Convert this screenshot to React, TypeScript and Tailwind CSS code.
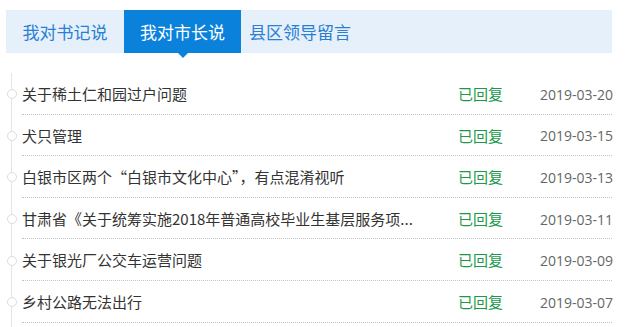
import React from "react";

const rows = [
  { t: "关于稀土仁和园过户问题", d: "2019-03-20" },
  { t: "犬只管理", d: "2019-03-15" },
  { t: "白银市区两个“白银市文化中心”，有点混淆视听", d: "2019-03-13" },
  { t: "甘肃省《关于统筹实施2018年普通高校毕业生基层服务项...", d: "2019-03-11" },
  { t: "关于银光厂公交车运营问题", d: "2019-03-09" },
  { t: "乡村公路无法出行", d: "2019-03-07" },
];

export default function App() {
  return (
    <div
      className="w-[640px] h-[327px] bg-white overflow-hidden"
      style={{ fontFamily: '"Noto Sans CJK SC", "Noto Sans", sans-serif' }}
    >
      <div className="pt-[10px] pl-[6px] w-[612px]">
        <div className="flex h-[43px] bg-[#e6f0fa] text-[17px]">
          <div className="w-[118px] flex items-center justify-center text-[#2a7fd4]">我对书记说</div>
          <div className="relative w-[117px] flex items-center justify-center bg-[#0a82dc] text-white">
            我对市长说
            <div className="absolute left-1/2 -translate-x-1/2 top-full w-0 h-0 border-l-[5px] border-r-[5px] border-t-[5px] border-l-transparent border-r-transparent border-t-[#0a82dc]" />
          </div>
          <div className="pl-[8px] flex items-center text-[#2a7fd4]">县区领导留言</div>
        </div>
      </div>
      <div className="relative mt-[20px] ml-[11px] w-[601px] border-l border-[#e5e5e5] pb-[40px]">
        {rows.map((r, i) => (
          <div key={i} className="relative flex items-center h-[41.6px] ml-[10px] border-b border-dotted border-[#c4c4c4] text-[15px] pt-[2px]">
            <div className="absolute left-[-15px] top-1/2 -translate-y-1/2 mt-[1px] w-[10px] h-[10px] rounded-full bg-white border border-[#dddddd]" />
            <div className="flex-1 text-[#333333] truncate">{r.t}</div>
            <div className="w-[82px] text-[#1a9a4a]">已回复</div>
            <div className="text-[#666666] text-[14px] w-[72px] text-right whitespace-nowrap" style={{ fontFamily: '"Open Sans", "Noto Sans", sans-serif' }}>{r.d}</div>
          </div>
        ))}
      </div>
    </div>
  );
}
